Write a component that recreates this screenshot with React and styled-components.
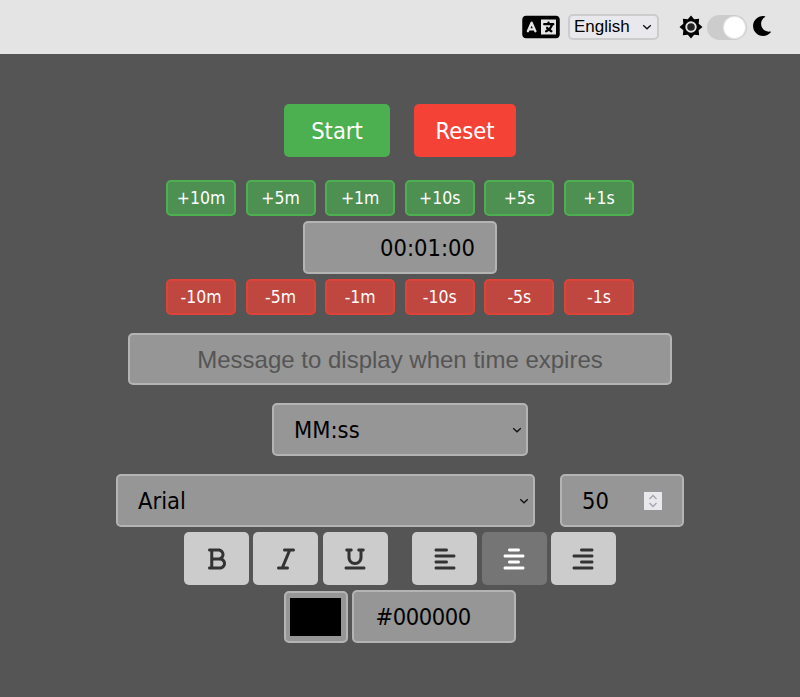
import React from "react";
import styled, { createGlobalStyle } from "styled-components";
import { FaLanguage, FaBold, FaItalic, FaUnderline, FaAlignLeft, FaAlignCenter, FaAlignRight } from "react-icons/fa6";
import { FaMoon } from "react-icons/fa";

const FONT = `"DejaVu Sans Condensed","DejaVu Sans",sans-serif`;
const chevron = `url("data:image/svg+xml,%3Csvg xmlns='http://www.w3.org/2000/svg' width='10' height='6' viewBox='0 0 10 6'%3E%3Cpath d='M1.2 1.2 5 4.8 8.8 1.2' fill='none' stroke='%23111' stroke-width='1.3'/%3E%3C/svg%3E")`;
const spinner = `url("data:image/svg+xml,%3Csvg xmlns='http://www.w3.org/2000/svg' width='18' height='18' viewBox='0 0 18 18'%3E%3Crect width='18' height='18' fill='%23e9e9ed'/%3E%3Cpath d='M5.5 7 9 3.5 12.5 7M5.5 11 9 14.5 12.5 11' fill='none' stroke='%23a3a3ad' stroke-width='1.4'/%3E%3C/svg%3E")`;

const Global = createGlobalStyle`
  html, body { margin: 0; padding: 0; background: #555; }
  body { font-family: ${FONT}; overflow: hidden; }
`;
const Page = styled.div`display:flex;flex-direction:column;min-height:697px;background:#555;`;
const Header = styled.header`
  height:54px;background:#e4e4e4;display:flex;align-items:center;justify-content:flex-end;padding-right:28px;box-sizing:border-box;
`;
const LangIcon = styled(FaLanguage)`width:38px;height:30px;color:#000;margin-right:8px;`;
const LangSelect = styled.select`
  appearance:none;width:91px;height:26px;font:17px "Liberation Sans",sans-serif;color:#000;border:2px solid #ccc;border-radius:5px;margin-right:20px;padding:0 0 2px 4px;
  background:#e9e9ed ${chevron} no-repeat right 5px center;
`;
const SunSvg = styled.svg`width:24px;height:24px;margin-right:4px;`;
const Moon = styled(FaMoon)`width:20px;height:20px;color:#000;margin-left:5px;margin-bottom:2px;`;
const Toggle = styled.div`
  width:40px;height:25px;border-radius:13px;background:#ccc;position:relative;
  &::after{content:"";position:absolute;right:2px;top:2px;width:21px;height:21px;border-radius:50%;background:#fff;box-shadow:0 0 0 1px #e6e6e6;}
`;
const Main = styled.main`display:flex;flex-direction:column;align-items:center;padding-top:50px;`;
const Row = styled.div`display:flex;justify-content:${p=>p.$justify||"center"};gap:${p=>p.$gap||0}px;margin-top:${p=>p.$top||0}px;width:${p=>p.$width?p.$width+"px":"auto"};`;
const ActionButton = styled.button`
  width:${p=>p.$w}px;height:53px;border:0;border-radius:5px;color:#fff;font:23.5px ${FONT};background:${p=>p.$bg};padding:0;
`;
const AdjButton = styled.button`
  width:70px;height:36px;box-sizing:border-box;border-radius:5px;color:#fff;font:17.5px ${FONT};padding:0;
  background:${p=>p.$plus?"#4e9052":"#c0473f"};border:2px solid ${p=>p.$plus?"#4caf50":"#dd4338"};
`;
const fieldCss = `
  box-sizing:border-box;background:#969696;border:2px solid #b4b4b4;border-radius:5px;color:#000;
`;
const TimeInput = styled.input`${fieldCss}width:194px;height:53px;text-align:right;font:23.5px ${FONT};padding:0 20px;`;
const MessageInput = styled.input`
  ${fieldCss}width:544px;height:52px;text-align:center;font:24px "Liberation Sans",sans-serif;padding:1px 10px 0;
  &::placeholder{color:#555;opacity:1;}
`;
const Select = styled.select`
  ${fieldCss}appearance:none;width:${p=>p.$w}px;height:53px;font:23.5px ${FONT};padding:1px 20px 0;
  background:#969696 ${chevron} no-repeat right 4px center;
`;
const SizeInput = styled.input`
  ${fieldCss}width:124px;height:53px;font:23.5px ${FONT};padding:0 20px;
  &::-webkit-inner-spin-button{appearance:none;opacity:1;width:18px;height:18px;margin:auto 0;background:${spinner} no-repeat center;}
`;
const FormatGroup = styled.div`display:flex;gap:4.4px;`;
const FormatButton = styled.button`
  width:65px;height:53px;border:0;border-radius:5px;padding:0;display:flex;align-items:center;justify-content:center;
  background:${p=>p.$active?"#757575":"#ccc"};color:${p=>p.$active?"#fff":"#333"};
  svg{width:24px;height:24px;}
`;
const ColorInput = styled.input`
  ${fieldCss}width:64px;height:52px;padding:5px 5px 5px 4px;margin-top:1px;
  &::-webkit-color-swatch-wrapper{padding:0;}
  &::-webkit-color-swatch{border:0;}
`;
const HexInput = styled.input`${fieldCss}width:164px;height:53px;font:23.5px ${FONT};letter-spacing:-0.45px;padding:0 21.5px;`;

const plus=["+10m","+5m","+1m","+10s","+5s","+1s"];
const minus=["-10m","-5m","-1m","-10s","-5s","-1s"];

const SunIcon = () => (
  <SunSvg viewBox="0 0 24 24" aria-hidden="true">
    <path fillRule="evenodd" d="M12 .5 15.18 4.33 20.13 3.87 19.67 8.82 23.5 12 19.67 15.18 20.13 20.13 15.18 19.67 12 23.5 8.82 19.67 3.87 20.13 4.33 15.18 .5 12 4.33 8.82 3.87 3.87 8.82 4.33ZM12 6.3A5.7 5.7 0 1 0 12 17.7 5.7 5.7 0 1 0 12 6.3Z" fill="#000"/>
    <circle cx="12" cy="12" r="3.8" fill="#222"/>
  </SunSvg>
);

export default function App(){
  return <Page>
    <Global/>
    <Header>
      <LangIcon/>
      <LangSelect defaultValue="English"><option>English</option></LangSelect>
      <SunIcon/><Toggle/><Moon/>
    </Header>
    <Main>
      <Row $gap={24}>
        <ActionButton $w={106} $bg="#4caf50">Start</ActionButton>
        <ActionButton $w={102} $bg="#f44336">Reset</ActionButton>
      </Row>
      <Row $top={23} $width={468} $justify="space-between">
        {plus.map(t=><AdjButton key={t} $plus>{t}</AdjButton>)}
      </Row>
      <Row $top={5}><TimeInput defaultValue="00:01:00"/></Row>
      <Row $top={5} $width={468} $justify="space-between">
        {minus.map(t=><AdjButton key={t}>{t}</AdjButton>)}
      </Row>
      <Row $top={18}><MessageInput placeholder="Message to display when time expires"/></Row>
      <Row $top={18}><Select $w={256} defaultValue="MM:ss"><option>MM:ss</option></Select></Row>
      <Row $top={18} $gap={25}>
        <Select $w={419} defaultValue="Arial"><option>Arial</option></Select>
        <SizeInput type="number" defaultValue={50}/>
      </Row>
      <Row $top={5} $gap={24.4}>
        <FormatGroup>
          <FormatButton><FaBold/></FormatButton>
          <FormatButton><FaItalic/></FormatButton>
          <FormatButton><FaUnderline/></FormatButton>
        </FormatGroup>
        <FormatGroup>
          <FormatButton><FaAlignLeft/></FormatButton>
          <FormatButton $active><FaAlignCenter/></FormatButton>
          <FormatButton><FaAlignRight/></FormatButton>
        </FormatGroup>
      </Row>
      <Row $top={5} $gap={4}>
        <ColorInput type="color" defaultValue="#000000"/>
        <HexInput defaultValue="#000000"/>
      </Row>
    </Main>
  </Page>;
}
